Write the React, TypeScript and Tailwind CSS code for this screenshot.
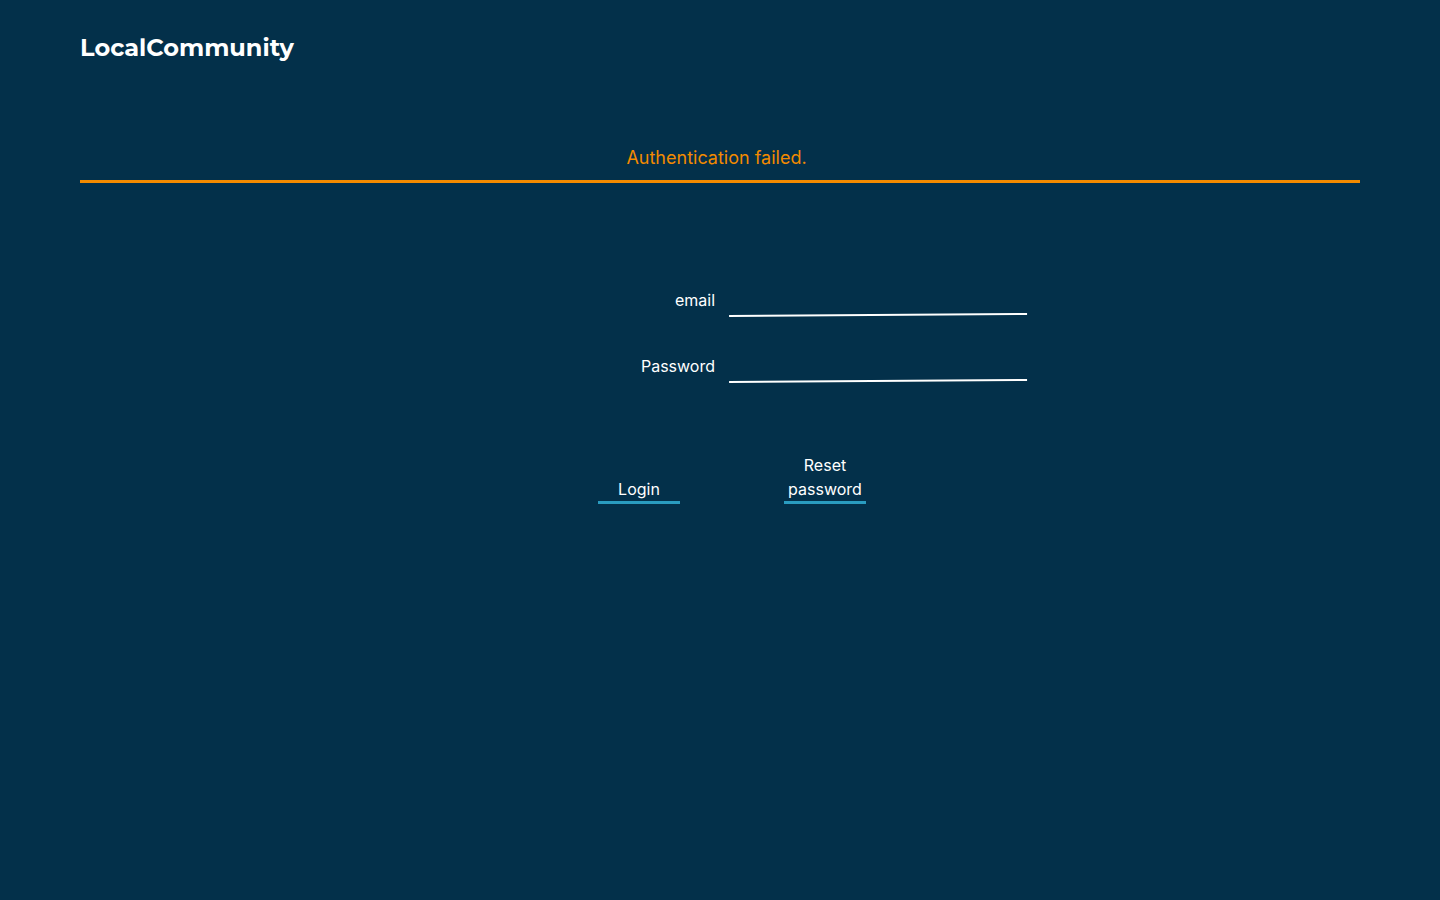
import React from 'react';

export default function App() {
  return (
    <div className="min-h-screen w-full bg-[#03304a] text-white font-['Inter',sans-serif]">
      <header className="px-20 pt-[32px] h-[64px]">
        <h1 className="text-[24px] leading-[32px] font-bold font-['Montserrat','Open_Sans',sans-serif]">
          LocalCommunity
        </h1>
      </header>

      <div className="mx-20 mt-[82px] border-b-[3px] border-[#f28a00] pb-[10px] pr-[7px] text-center">
        <p className="text-[18px] leading-[24px] text-[#f28a00]">Authentication failed.</p>
      </div>

      <form className="mt-[105px] flex flex-col items-center gap-[38px]" onSubmit={(e) => e.preventDefault()}>
        <div className="flex items-end gap-[14px]">
          <label className="w-[302px] text-right text-[16px] leading-[24px] pb-[4px]">email</label>
          <input
            type="email"
            className="w-[298px] h-[24px] bg-transparent border-b-2 border-white outline-none -rotate-[0.4deg]"
          />
        </div>
        <div className="flex items-end gap-[14px]">
          <label className="w-[302px] text-right text-[16px] leading-[24px] pb-[4px]">Password</label>
          <input
            type="password"
            className="w-[298px] h-[24px] bg-transparent border-b-2 border-white outline-none -rotate-[0.4deg]"
          />
        </div>

        <div className="mt-[33px] flex items-end gap-[104px] pl-[24px]">
          <button type="submit" className="w-[82px] border-b-[3px] border-[#2a9cc0] text-[16px] leading-[24px]">
            Login
          </button>
          <button type="button" className="w-[82px] border-b-[3px] border-[#2a9cc0] text-[16px] leading-[24px]">
            Reset password
          </button>
        </div>
      </form>
    </div>
  );
}
